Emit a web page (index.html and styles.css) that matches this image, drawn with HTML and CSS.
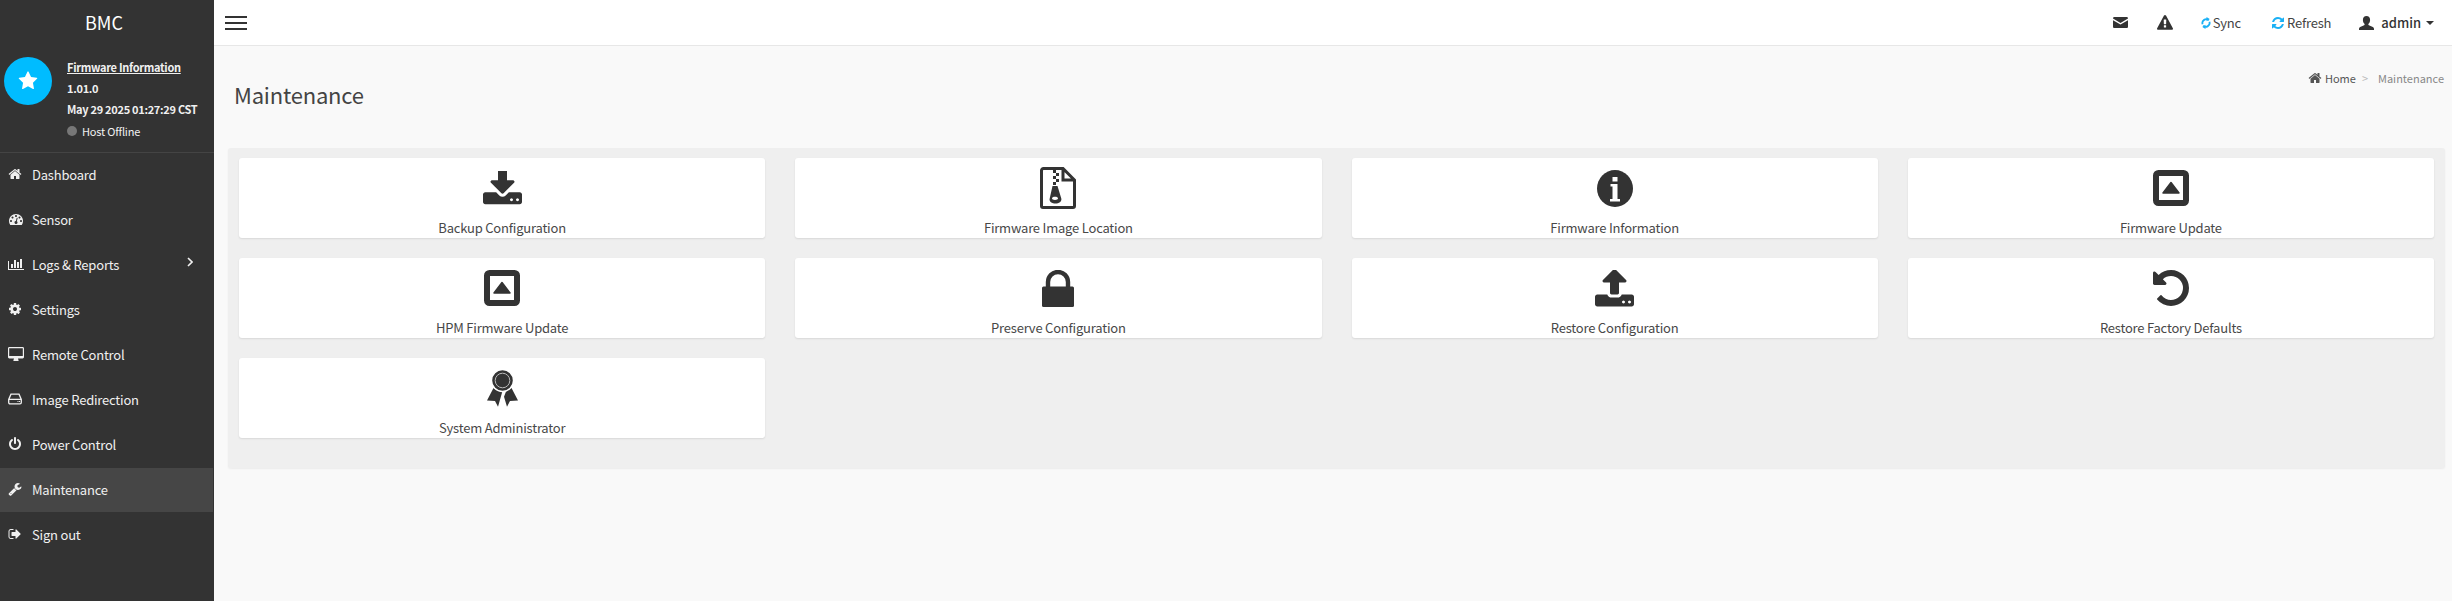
FILE: index.html
```html
<!DOCTYPE html>
<html lang="en">
<head>
    <meta charset="UTF-8">
    <title>Maintenance</title>
    <link rel="stylesheet" href="styles.css">
</head>
<body>
    <aside class="sidebar">
        <div class="brand">BMC</div>
        <div class="profile">
            <div class="profile-badge">
                <svg class="profile-star" viewBox="0 0 1792 1792"><path d="M1728 647q0 22-26 48l-363 354 86 500q1 7 1 20 0 21-10.5 35.5t-30.5 14.5q-19 0-40-12l-449-236-449 236q-22 12-40 12-21 0-31.5-14.5t-10.5-35.5q0-6 2-20l86-500-364-354q-25-27-25-48 0-37 56-46l502-73 225-455q19-41 49-41t49 41l225 455 502 73q56 9 56 46z"/></svg>
            </div>
            <div class="profile-info">
                <a class="profile-line profile-link" href="#">Firmware Information</a>
                <div class="profile-line">1.01.0</div>
                <div class="profile-line">May 29 2025 01:27:29 CST</div>
                <div class="profile-status"><span class="status-dot"></span>Host Offline</div>
            </div>
        </div>
        <nav class="menu">
            <a class="menu-item" href="#"><span class="menu-icon"><svg class="icon-14" viewBox="0 0 1792 1792"><path d="M1472 992v480q0 26-19 45t-45 19h-384v-384h-256v384h-384q-26 0-45-19t-19-45v-480q0-1 .5-3t.5-3l575-474 575 474q1 2 1 6zm223-69l-62 74q-8 9-21 11h-3q-13 0-21-7l-692-577-692 577q-12 8-24 7-13-2-21-11l-62-74q-8-10-7-23.5t11-21.5l719-599q32-26 76-26t76 26l244 204v-195q0-14 9-23t23-9h192q14 0 23 9t9 23v408l219 182q10 8 11 21.5t-7 23.5z"/></svg></span>Dashboard</a>
            <a class="menu-item" href="#"><span class="menu-icon"><svg class="icon-16" viewBox="0 0 1792 1792"><path d="M384 1152q0-53-37.5-90.5t-90.5-37.5-90.5 37.5-37.5 90.5 37.5 90.5 90.5 37.5 90.5-37.5 37.5-90.5zm192-448q0-53-37.5-90.5t-90.5-37.5-90.5 37.5-37.5 90.5 37.5 90.5 90.5 37.5 90.5-37.5 37.5-90.5zm428 481l101-382q6-26-7.5-48.5t-38.5-29.5-48 6.5-30 39.5l-101 382q-60 5-107 43.5t-63 98.5q-20 77 20 146t117 89 146-20 89-117q16-60-6-117t-72-91zm660-33q0-53-37.5-90.5t-90.5-37.5-90.5 37.5-37.5 90.5 37.5 90.5 90.5 37.5 90.5-37.5 37.5-90.5zm-640-640q0-53-37.5-90.5t-90.5-37.5-90.5 37.5-37.5 90.5 37.5 90.5 90.5 37.5 90.5-37.5 37.5-90.5zm448 192q0-53-37.5-90.5t-90.5-37.5-90.5 37.5-37.5 90.5 37.5 90.5 90.5 37.5 90.5-37.5 37.5-90.5zm320 448q0 261-141 483-19 29-54 29h-1402q-35 0-54-29-141-221-141-483 0-182 71-348t191-286 286-191 348-71 348 71 286 191 191 286 71 348z"/></svg></span>Sensor</a>
            <a class="menu-item" href="#"><span class="menu-icon"><svg class="icon-16" viewBox="0 0 2048 1792"><path d="M640 896v512h-256v-512h256zm384-512v1024h-256v-1024h256zm1024 1152v128h-2048v-1152h128v1024h1920zm-640-896v768h-256v-768h256zm384-384v1152h-256v-1152h256z"/></svg></span>Logs &amp; Reports<svg class="menu-arrow" viewBox="0 0 6 10"><path d="M1 1l4 4-4 4"/></svg></a>
            <a class="menu-item" href="#"><span class="menu-icon"><svg class="icon-14" viewBox="0 0 1792 1792"><path d="M1152 896q0-106-75-181t-181-75-181 75-75 181 75 181 181 75 181-75 75-181zm512-109v222q0 12-8 23t-20 13l-185 28q-19 54-39 91 35 50 107 138 10 12 10 25t-9 23q-27 37-99 108t-94 71q-12 0-26-9l-138-108q-44 23-91 38-16 136-29 186-7 28-36 28h-222q-14 0-24.5-8.5t-11.5-21.5l-28-184q-49-16-90-37l-141 107q-10 9-25 9-14 0-25-11-126-114-165-168-7-10-7-23 0-12 8-23 15-21 51-66.5t54-70.5q-27-50-41-99l-183-27q-13-2-21-12.5t-8-23.5v-222q0-12 8-23t19-13l186-28q14-46 39-92-40-57-107-138-10-12-10-24 0-10 9-23 26-36 98.5-107.5t94.5-71.5q13 0 26 10l138 107q44-23 91-38 16-136 29-186 7-28 36-28h222q14 0 24.5 8.5t11.5 21.5l28 184q49 16 90 37l142-107q9-9 24-9 13 0 25 10 129 119 165 170 7 8 7 22 0 12-8 23-15 21-51 66.5t-54 70.5q26 50 41 98l183 28q13 2 21 12.5t8 23.5z"/></svg></span>Settings</a>
            <a class="menu-item" href="#"><span class="menu-icon"><svg class="icon-16" viewBox="0 0 16 14"><path fill-rule="evenodd" d="M1.4 0h13.2c.8 0 1.4.6 1.4 1.4v8.7c0 .8-.6 1.4-1.4 1.4H10c0 .8.6 1.4.6 1.9 0 .3-.2.6-.6.6H6c-.4 0-.6-.3-.6-.6 0-.5.6-1.1.6-1.9H1.4C.6 11.500 0 10.900 0 10.100V1.400C0 .6.600 0 1.400 0zM1.200 1.200v7.800h13.600V1.200z"/></svg></span>Remote Control</a>
            <a class="menu-item" href="#"><span class="menu-icon"><svg class="icon-14" viewBox="0 0 14 11"><path class="icon-line" d="M3 .7h8l2.300 5.300v3a1.300 1.300 0 0 1-1.300 1.300H2A1.300 1.300 0 0 1 .7 9V6zM.9 5.800h12.200"/><path d="M9.500 7.500h1v1h-1zM11 7.500h1v1h-1z"/></svg></span>Image Redirection</a>
            <a class="menu-item" href="#"><span class="menu-icon"><svg class="icon-14" viewBox="0 0 1792 1792"><path d="M1664 896q0 156-61 298t-164 245-245 164-298 61-298-61-245-164-164-245-61-298q0-182 80.500-343t226.500-270q43-32 95.500-25t83.500 50q32 42 24.500 94.500t-49.500 84.500q-98 74-151.500 181t-53.500 228q0 104 40.500 198.500t109.500 163.500 163.500 109.500 198.500 40.500 198.500-40.500 163.500-109.500 109.500-163.500 40.500-198.500q0-121-53.500-228t-151.500-181q-42-32-49.500-84.500t24.500-94.500q31-43 84-50t95 25q146 109 226.500 270t80.500 343zm-640-768v640q0 52-38 90t-90 38-90-38-38-90v-640q0-52 38-90t90-38 90 38 38 90z"/></svg></span>Power Control</a>
            <a class="menu-item menu-item-active" href="#"><span class="menu-icon"><svg class="icon-14" viewBox="0 0 1792 1792"><path d="M448 1472q0-26-19-45t-45-19-45 19-19 45 19 45 45 19 45-19 19-45zm644-420l-682 682q-37 37-90 37-52 0-91-37l-106-108q-38-36-38-90 0-53 38-91l681-681q39 98 114.500 173.500t173.500 114.500zm634-435q0 39-23 106-47 134-164.500 217.500t-258.500 83.500q-185 0-316.500-131.500t-131.500-316.500 131.500-316.500 316.500-131.500q58 0 121.500 16.500t107.500 46.500q16 11 16 28t-16 28l-293 169v224l193 107q5-3 79-48.500t135.500-81 70.500-35.500q15 0 23.500 10t8.500 25z"/></svg></span>Maintenance</a>
            <a class="menu-item" href="#"><span class="menu-icon"><svg class="icon-14" viewBox="0 0 1792 1792"><path d="M704 1440q0 4 1 20t.5 26.500-3 23.500-10 19.500-20.500 6.500h-320q-119 0-203.500-84.500t-84.500-203.500v-704q0-119 84.500-203.500t203.500-84.500h320q13 0 22.500 9.500t9.500 22.500q0 4 1 20t.5 26.500-3 23.500-10 19.500-20.500 6.500h-320q-66 0-113 47t-47 113v704q0 66 47 113t113 47h312l11.500 1 11.500 3 8 5.500 7 9 2 13.500zm928-544q0 26-19 45l-544 544q-19 19-45 19t-45-19-19-45v-288h-448q-26 0-45-19t-19-45v-384q0-26 19-45t45-19h448v-288q0-26 19-45t45-19 45 19l544 544q19 19 19 45z"/></svg></span>Sign out</a>
        </nav>
    </aside>

    <div class="main">
        <header class="topbar">
            <div class="hamburger"><span></span><span></span><span></span></div>
            <div class="topbar-right">
                <svg class="top-mail" viewBox="0 0 15 11"><path d="M0 1.300C0 .6.600 0 1.300 0h12.400c.7 0 1.300.6 1.300 1.300v.3L7.500 6 0 1.600zM0 3.200l7.500 4.400L15 3.200v6.500c0 .7-.6 1.300-1.300 1.300H1.300C.6 11 0 10.400 0 9.700z"/></svg>
                <svg class="top-warning" viewBox="0 0 1792 1792"><path d="M1024 1375v-190q0-14-9.500-23.500t-22.500-9.500h-192q-13 0-22.500 9.500t-9.500 23.500v190q0 14 9.500 23.500t22.500 9.500h192q13 0 22.500-9.500t9.500-23.500zm-2-374l18-459q0-12-10-19-13-11-24-11h-220q-11 0-24 11-10 7-10 21l17 457q0 10 10 16.500t24 6.500h185q14 0 23.500-6.500t10.500-16.500zm-14-934l768 1408q35 63-2 126-17 29-46.500 46t-63.500 17h-1536q-34 0-63.500-17t-46.500-46q-37-63-2-126l768-1408q17-31 47-49t65-18 65 18 47 49z"/></svg>
                <a class="top-link top-sync" href="#"><svg class="sync-icon" viewBox="0 0 10 12"><path class="sync-arc" d="M7.800 3.300A3.800 3.800 0 0 0 1.600 7.300M2.200 8.700A3.800 3.800 0 0 0 8.400 4.700"/><path class="sync-head" d="M5.500 0v4.200l3.200-2.100zM4.500 12V7.800L1.300 9.900z"/></svg>Sync</a>
                <a class="top-link top-refresh" href="#"><svg class="refresh-icon" viewBox="0 0 1792 1792"><path d="M1639 1056q0 5-1 7-64 268-268 434.500t-478 166.500q-146 0-282.500-55t-243.500-157l-129 129q-19 19-45 19t-45-19-19-45v-448q0-26 19-45t45-19h448q26 0 45 19t19 45-19 45l-137 137q71 66 161 102t187 36q134 0 250-65t186-179q11-17 53-117 8-23 30-23h192q13 0 22.500 9.500t9.500 22.500zm25-800v448q0 26-19 45t-45 19h-448q-26 0-45-19t-19-45 19-45l138-138q-148-137-349-137-134 0-250 65t-186 179q-11 17-53 117-8 23-30 23h-199q-13 0-22.500-9.500t-9.500-22.500v-7q65-268 270-434.500t480-166.500q146 0 284 55.500t245 156.500l130-129q19-19 45-19t45 19 19 45z"/></svg>Refresh</a>
                <a class="top-user" href="#"><svg class="user-icon" viewBox="0 0 15 14"><path d="M7.500 0c2.200 0 3.600 1.600 3.600 3.900 0 1.500-.6 3-1.500 3.900-.4.400-.3 1.200.3 1.500l3.300 1.400c1 .4 1.800 1.200 1.800 2.100V14H0v-1.200c0-.9.800-1.700 1.800-2.100l3.300-1.400c.6-.3.700-1.100.3-1.500-.9-.9-1.500-2.400-1.500-3.900C3.900 1.600 5.300 0 7.500 0z"/></svg>admin<span class="caret"></span></a>
            </div>
        </header>

        <div class="page-head">
            <h1 class="page-title">Maintenance</h1>
            <div class="breadcrumb">
                <svg class="crumb-home" viewBox="0 0 1792 1792"><path d="M1472 992v480q0 26-19 45t-45 19h-384v-384h-256v384h-384q-26 0-45-19t-19-45v-480q0-1 .5-3t.5-3l575-474 575 474q1 2 1 6zm223-69l-62 74q-8 9-21 11h-3q-13 0-21-7l-692-577-692 577q-12 8-24 7-13-2-21-11l-62-74q-8-10-7-23.500t11-21.500l719-599q32-26 76-26t76 26l244 204v-195q0-14 9-23t23-9h192q14 0 23 9t9 23v408l219 182q10 8 11 21.500t-7 23.500z"/></svg>
                <a class="crumb-link" href="#">Home</a>
                <span class="crumb-sep">&gt;</span>
                <span class="crumb-current">Maintenance</span>
            </div>
        </div>

        <section class="panel">
            <a class="tile" href="#">
                <span class="tile-icon"><svg class="ic-tray" viewBox="64 128 1664 1472"><path d="M1344 1344q0-26-19-45t-45-19-45 19-19 45 19 45 45 19 45-19 19-45zm256 0q0-26-19-45t-45-19-45 19-19 45 19 45 45 19 45-19 19-45zm128-224v320q0 40-28 68t-68 28h-1472q-40 0-68-28t-28-68v-320q0-40 28-68t68-28h465l135 136q58 56 136 56t136-56l136-136h464q40 0 68 28t28 68zm-325-569q17 41-14 70l-448 448q-18 19-45 19t-45-19l-448-448q-31-29-14-70 17-39 59-39h256v-448q0-26 19-45t45-19h256q26 0 45 19t19 45v448h256q42 0 59 39z"/></svg></span>
                <span class="tile-label">Backup Configuration</span>
            </a>
            <a class="tile" href="#">
                <span class="tile-icon"><svg class="ic-zip" viewBox="0 0 36 42"><path class="zip-outline" d="M3.500 1.500H23L34.500 13v26a1.500 1.500 0 0 1-1.500 1.500H3A1.500 1.500 0 0 1 1.500 39V3.500a2 2 0 0 1 2-2zM23 2v11h11"/><path d="M13 3h3v3h-3zM16 6h3v3h-3zM13 9h3v3h-3zM16 12h3v3h-3zM13 15h3v3h-3z"/><path fill-rule="evenodd" d="M12.500 19h5l3.800 12.500c.8 3-2.500 5-5.800 5s-6.800-2-5.800-5zM15 29.700c-1.800 0-3 .7-3 1.600s1.200 1.600 3 1.600 3-.7 3-1.600-1.200-1.600-3-1.600z"/></svg></span>
                <span class="tile-label">Firmware Image Location</span>
            </a>
            <a class="tile" href="#">
                <span class="tile-icon"><svg class="ic-info" viewBox="0 0 36 37"><ellipse cx="18" cy="18.500" rx="18" ry="18.500"/><path class="info-mark" d="M15.500 7h5v4.500h-5zM13.500 14h7v15h2.500v2.500H13V29h2.500V16.500h-2z"/></svg></span>
                <span class="tile-label">Firmware Information</span>
            </a>
            <a class="tile" href="#">
                <span class="tile-icon"><svg class="ic-square" viewBox="0 0 36 36"><rect class="square-frame" x="3" y="3" width="30" height="30" rx="2.500"/><path class="square-arrow" d="M18 12.500l8 10.500H10z"/></svg></span>
                <span class="tile-label">Firmware Update</span>
            </a>
            <a class="tile" href="#">
                <span class="tile-icon"><svg class="ic-square" viewBox="0 0 36 36"><rect class="square-frame" x="3" y="3" width="30" height="30" rx="2.500"/><path class="square-arrow" d="M18 12.500l8 10.500H10z"/></svg></span>
                <span class="tile-label">HPM Firmware Update</span>
            </a>
            <a class="tile" href="#">
                <span class="tile-icon"><svg class="ic-lock" viewBox="0 0 32 37"><path class="lock-shackle" d="M6 18v-6a10 10 0 0 1 20 0v6"/><rect y="16.500" width="32" height="20.500" rx="1.500"/></svg></span>
                <span class="tile-label">Preserve Configuration</span>
            </a>
            <a class="tile" href="#">
                <span class="tile-icon"><svg class="ic-tray ic-upload" viewBox="64 128 1664 1536"><path d="M1344 1472q0-26-19-45t-45-19-45 19-19 45 19 45 45 19 45-19 19-45zm256 0q0-26-19-45t-45-19-45 19-19 45 19 45 45 19 45-19 19-45zm128-224v320q0 40-28 68t-68 28h-1472q-40 0-68-28t-28-68v-320q0-40 28-68t68-28h427q21 56 70.500 92t110.500 36h256q61 0 110.500-36t70.500-92h427q40 0 68 28t28 68zm-325-648q-17 40-59 40h-256v448q0 26-19 45t-45 19h-256q-26 0-45-19t-19-45v-448h-256q-42 0-59-40-17-39 14-69l448-448q18-19 45-19t45 19l448 448q31 30 14 69z"/></svg></span>
                <span class="tile-label">Restore Configuration</span>
            </a>
            <a class="tile" href="#">
                <span class="tile-icon"><svg class="ic-square" viewBox="128 128 1536 1536"><path d="M1664 896q0 156-61 298t-164 245-245 164-298 61q-172 0-327-72.500t-264-204.500q-7-10-6.500-22.500t8.500-20.500l137-138q10-9 25-9 16 2 23 12 73 95 179 147t225 52q104 0 198.500-40.500t163.500-109.500 109.500-163.500 40.500-198.500-40.500-198.500-109.500-163.500-163.500-109.500-198.500-40.500q-98 0-188 35.500t-160 101.500l137 138q31 30 14 69-17 40-59 40h-448q-26 0-45-19t-19-45v-448q0-42 40-59 39-17 69 14l130 129q107-101 244.500-156.500t284.500-55.500q156 0 298 61t245 164 164 245 61 298z"/></svg></span>
                <span class="tile-label">Restore Factory Defaults</span>
            </a>
            <a class="tile" href="#">
                <span class="tile-icon"><svg class="ic-award" viewBox="0 0 31 37"><path d="M6.500 18c2 2 5 3 9 3L11 36.800 8 31 0 30.500zM24.500 18l6.500 12.500-8 .5-3 5.800-3-10 3-7.800c1.700 0 3.200-.4 4.500-1z"/><circle class="award-seal" cx="15.500" cy="10.500" r="11"/><circle class="award-ring" cx="15.500" cy="10.500" r="7.300"/></svg></span>
                <span class="tile-label">System Administrator</span>
            </a>
        </section>
    </div>
</body>
</html>
```

FILE: styles.css
```css
* {
    box-sizing: border-box;
}

body {
    display: flex;
    min-height: 100vh;
    margin: 0;
    font-family: "Noto Sans CJK SC", sans-serif;
    font-size: 13px;
    letter-spacing: -0.2px;
    background-color: #f9f9f9;
    color: #333;
}

a {
    color: inherit;
    text-decoration: none;
}

svg {
    display: block;
    fill: currentColor;
    flex: none;
}

/* Sidebar */
.sidebar {
    width: 214px;
    flex: none;
    background-color: #333;
    color: #f0f0f0;
}

.brand {
    height: 46px;
    line-height: 44px;
    text-align: center;
    font-size: 18px;
    letter-spacing: 0;
    color: #fff;
    padding-right: 6px;
}

.profile {
    display: flex;
    gap: 15px;
    height: 107px;
    padding: 11px 0 0 4px;
    border-bottom: 1px solid #444;
}

.profile-badge {
    display: flex;
    justify-content: center;
    align-items: center;
    width: 48px;
    height: 48px;
    border-radius: 50%;
    background-color: #00bcff;
    color: #fff;
}

.profile-star {
    width: 20px;
    height: 20px;
}

.profile-info {
    white-space: nowrap;
}

.profile-line {
    display: block;
    height: 21px;
    line-height: 21px;
    font-size: 11px;
    font-weight: 700;
    letter-spacing: -0.3px;
}

.profile-link {
    text-decoration: underline;
}

.profile-status {
    display: flex;
    align-items: center;
    height: 21px;
    font-size: 11px;
}

.status-dot {
    width: 10px;
    height: 10px;
    margin-right: 5px;
    border-radius: 50%;
    background-color: #777;
}

.menu-item {
    display: flex;
    align-items: center;
    height: 44px;
    margin: 0 1px 1px 0;
    padding: 0 0 2px 8px;
}

.menu-item-active {
    background-color: #464646;
}

.menu-icon {
    display: flex;
    width: 24px;
}

.icon-14 {
    width: 14px;
    height: 14px;
}

.icon-16 {
    width: 16px;
    height: 14px;
}

.menu-arrow {
    width: 6px;
    height: 10px;
    margin: -4px 20px 0 auto;
    fill: none;
    stroke: currentColor;
    stroke-width: 1.6;
}

.icon-line {
    fill: none;
    stroke: currentColor;
    stroke-width: 1.300;
}

/* Top bar */
.main {
    flex: 1;
    min-width: 0;
}

.topbar {
    display: flex;
    justify-content: space-between;
    align-items: center;
    height: 46px;
    padding: 0 18px 0 11px;
    background-color: #fff;
    border-bottom: 1px solid #e7e7e7;
}

.hamburger {
    display: flex;
    flex-direction: column;
    gap: 4px;
    width: 22px;
}

.hamburger span {
    height: 2px;
    background-color: #333;
}

.topbar-right {
    display: flex;
    align-items: center;
}

.top-mail {
    width: 15px;
    height: 11px;
    margin-right: 29px;
}

.top-warning {
    width: 16px;
    height: 16px;
    margin-right: 28px;
}

.top-link {
    display: flex;
    align-items: center;
    color: #444;
}

.top-sync {
    margin-right: 30px;
}

.top-refresh {
    margin-right: 28px;
}

.sync-icon {
    width: 10px;
    height: 12px;
    margin-right: 2px;
    color: #1ab0f5;
}

.sync-arc {
    fill: none;
    stroke: currentColor;
    stroke-width: 1.800;
}

.sync-head {
    fill: currentColor;
}

.refresh-icon {
    width: 14px;
    height: 14px;
    margin-right: 2px;
    color: #1ab0f5;
}

.top-user {
    display: flex;
    align-items: center;
    font-weight: 500;
    letter-spacing: 0;
}

.user-icon {
    width: 15px;
    height: 14px;
    margin-right: 7px;
}

.caret {
    width: 0;
    height: 0;
    margin-left: 5px;
    border-top: 4px solid #333;
    border-left: 4px solid transparent;
    border-right: 4px solid transparent;
}

/* Page heading */
.page-head {
    display: flex;
    justify-content: space-between;
    align-items: flex-start;
    height: 102px;
    padding: 23px 8px 0 20px;
}

.page-title {
    margin: 0;
    font-size: 22px;
    font-weight: 400;
    line-height: 50px;
    color: #444;
}

.breadcrumb {
    display: flex;
    align-items: center;
    height: 18px;
    font-size: 11px;
    letter-spacing: 0;
    color: #555;
}

.crumb-home {
    width: 14px;
    height: 14px;
    margin-right: 3px;
}

.crumb-sep {
    margin: 0 10px 0 6px;
    color: #bbb;
}

.crumb-current {
    color: #888;
}

/* Tiles */
.panel {
    display: grid;
    grid-template-columns: repeat(4, 1fr);
    gap: 20px 30px;
    margin: 0 7px 0 14px;
    padding: 10px 11px 30px 11px;
    background-color: #efefef;
    border-radius: 3px;
    box-shadow: 0 1px 2px rgba(0, 0, 0, 0.06);
}

.tile {
    display: flex;
    flex-direction: column;
    align-items: center;
    height: 80px;
    padding-top: 9px;
    background-color: #fff;
    border-radius: 3px;
    box-shadow: 0 1px 2px rgba(0, 0, 0, 0.1);
}

.tile-icon {
    display: flex;
    justify-content: center;
    align-items: center;
    height: 42px;
}

.tile-label {
    margin-top: 9px;
    line-height: 20px;
    color: #484848;
}

.ic-tray {
    width: 39px;
    height: 35px;
}

.ic-upload {
    height: 37px;
}

.ic-zip {
    width: 36px;
    height: 42px;
}

.zip-outline {
    fill: none;
    stroke: currentColor;
    stroke-width: 3;
}

.ic-square {
    width: 36px;
    height: 36px;
}

.ic-info {
    width: 36px;
    height: 37px;
}

.info-mark {
    fill: #fff;
}

.square-frame {
    fill: none;
    stroke: currentColor;
    stroke-width: 6;
}

.square-arrow {
    stroke: currentColor;
    stroke-width: 1.500;
    stroke-linejoin: round;
}

.ic-lock {
    width: 32px;
    height: 37px;
}

.lock-shackle {
    fill: none;
    stroke: currentColor;
    stroke-width: 4.400;
}

.ic-award {
    width: 31px;
    height: 37px;
}

.award-seal {
    stroke: #fff;
    stroke-width: 1.400;
}

.award-ring {
    fill: none;
    stroke: #bbb;
    stroke-width: 1;
}
```
